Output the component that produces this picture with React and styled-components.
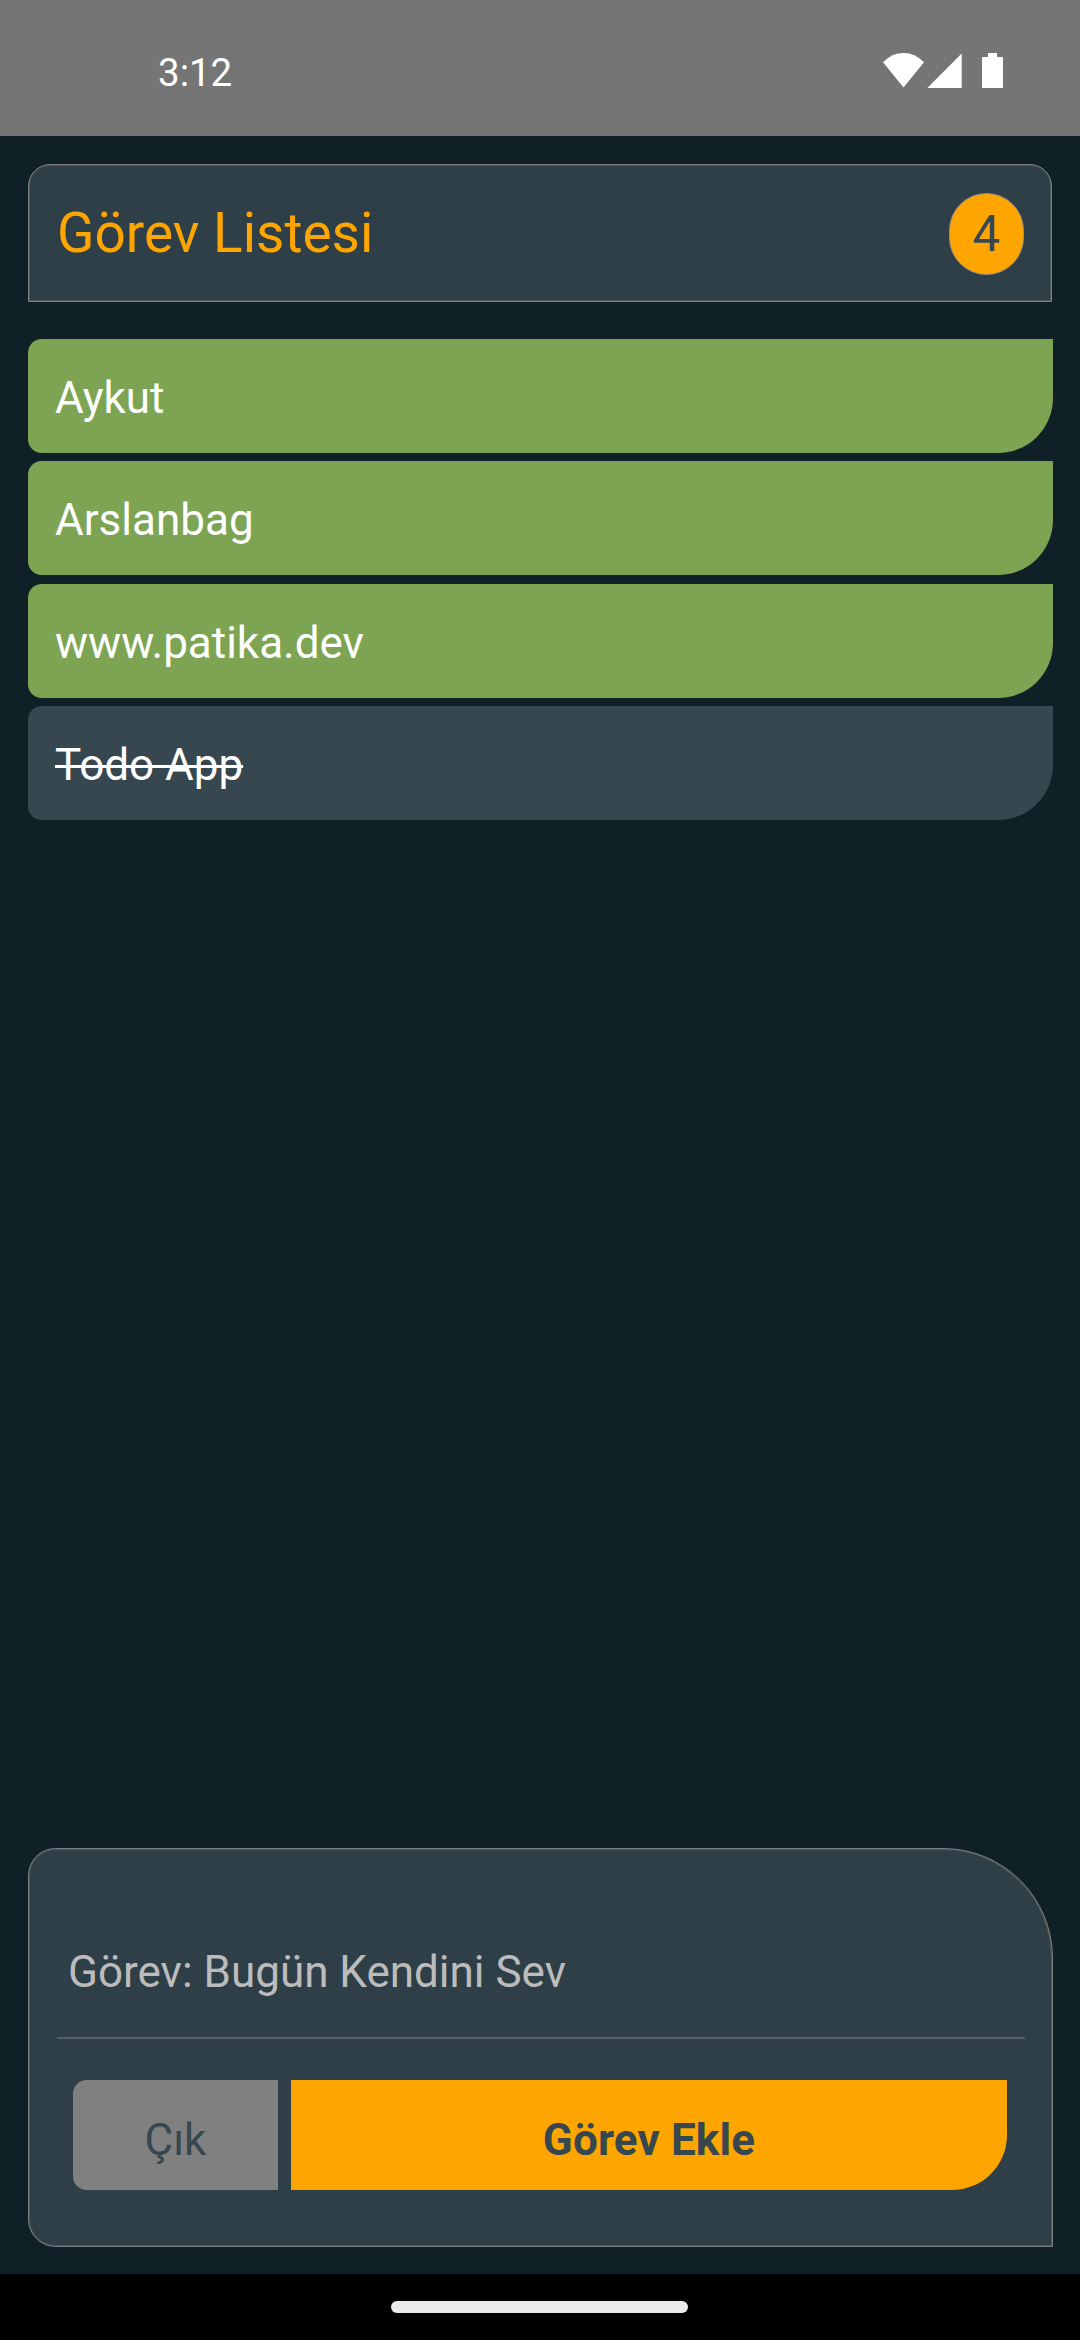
import React from "react";
import styled, { createGlobalStyle, css } from "styled-components";

const Global = createGlobalStyle`
  * { box-sizing: border-box; }
  body { margin: 0; background: #102027; }
  button, input { font: inherit; border: 0; margin: 0; }
`;

const Screen = styled.div`
  width: 1080px;
  height: 2340px;
  display: flex;
  flex-direction: column;
  overflow: hidden;
  background: #102027;
  font-family: Roboto, "Noto Sans", sans-serif;
  font-size: 44px;
  line-height: 52px;
`;

const StatusBar = styled.header`
  height: 136px;
  flex: none;
  display: flex;
  justify-content: space-between;
  padding: 53px 77px 0 158px;
  background: #757575;
  color: #fff;
`;

const Clock = styled.time`
  font-size: 38.5px;
  line-height: 40px;
`;

const StatusIcons = styled.svg`
  display: block;
  width: 120px;
  height: 36px;
`;

const Page = styled.main`
  flex: 1;
  display: flex;
  flex-direction: column;
  padding: 28px 27px 27px 28px;
`;

const panel = css`
  background: #2f3f47;
  border: 1px solid #808080;
  box-shadow: inset 0 0 0 1px rgba(128, 128, 128, 0.36);
`;

const TitleBar = styled.section`
  ${panel}
  height: 138px;
  margin-right: 1px;
  display: flex;
  align-items: center;
  justify-content: space-between;
  padding: 0 27px 0 28px;
  border-radius: 22px 22px 0 0;
`;

const Title = styled.h1`
  margin: 0;
  color: #ffa500;
  font-size: 55px;
  font-weight: 400;
  line-height: 64px;
`;

const Count = styled.span`
  width: 75px;
  height: 82px;
  margin-top: 2px;
  display: flex;
  align-items: center;
  justify-content: center;
  border: 1px solid #969185;
  border-radius: 37.5px;
  background: #ffa500;
  color: #37474f;
  font-size: 49.5px;
  line-height: 58px;
`;

const TaskList = styled.ul`
  flex: 1;
  list-style: none;
  margin: 37px 0 0;
  padding: 0;
  display: flex;
  flex-direction: column;
  gap: 8.35px;
`;

const Task = styled.li`
  height: 114px;
  flex: none;
  display: flex;
  align-items: center;
  padding: 4px 27px 0;
  border-radius: 13.75px 0 55px 13.75px;
  background: ${(p) => (p.$done ? "#37474f" : "#7da453")};
  color: #fff;
  text-decoration: ${(p) => (p.$done ? "line-through" : "none")};
  text-decoration-thickness: 2.5px;
`;

const Form = styled.section`
  ${panel}
  height: 399px;
  flex: none;
  padding: 97px 27px 0 28px;
  border-radius: 27.5px 110px 0 27.5px;
`;

const Field = styled.div`
  height: 93px;
  padding: 0 11px;
  border-bottom: 2px solid #596063;
  color: #bcbcbc;
`;

const Actions = styled.div`
  display: flex;
  gap: 13px;
  margin: 41px 18px 0 16px;
`;

const Button = styled.button`
  height: 110px;
  padding: 10px 0 0;
  color: #37474f;
  ${(p) =>
    p.$primary
      ? css`
          flex: 1;
          background: #ffa500;
          border-radius: 0 0 55px 0;
          font-weight: 700;
          letter-spacing: 0.15px;
        `
      : css`
          width: 205px;
          background: #808080;
          border-radius: 13.75px 0 0 13.75px;
        `}
`;

const NavBar = styled.footer`
  height: 66px;
  flex: none;
  display: flex;
  justify-content: center;
  padding: 27px 1px 0 0;
  background: #000;
`;

const Handle = styled.span`
  width: 297px;
  height: 12px;
  border-radius: 6px;
  background: #ebebeb;
`;

const tasks = [
  { text: "Aykut" },
  { text: "Arslanbag" },
  { text: "www.patika.dev" },
  { text: "Todo App", done: true },
];

export default function App() {
  return (
    <Screen>
      <Global />
      <StatusBar>
        <Clock>3:12</Clock>
        <StatusIcons viewBox="0 0 120 36" fill="#fff">
          <path d="M0 9.3 Q9 0 20.5 0 Q32 0 41 9.3 L20.5 34.5 Z" />
          <path d="M44.3 35 L78.7 .6 V35 Z" />
          <path d="M105 0 h9 v4 h5 a1 1 0 0 1 1 1 v29 a1 1 0 0 1 -1 1 h-19 a1 1 0 0 1 -1 -1 v-29 a1 1 0 0 1 1 -1 h5 Z" />
        </StatusIcons>
      </StatusBar>
      <Page>
        <TitleBar>
          <Title>Görev Listesi</Title>
          <Count>{tasks.length}</Count>
        </TitleBar>
        <TaskList>
          {tasks.map((t) => (
            <Task key={t.text} $done={t.done}>
              {t.text}
            </Task>
          ))}
        </TaskList>
        <Form>
          <Field>Görev: Bugün Kendini Sev</Field>
          <Actions>
            <Button>Çık</Button>
            <Button $primary>Görev Ekle</Button>
          </Actions>
        </Form>
      </Page>
      <NavBar>
        <Handle />
      </NavBar>
    </Screen>
  );
}
